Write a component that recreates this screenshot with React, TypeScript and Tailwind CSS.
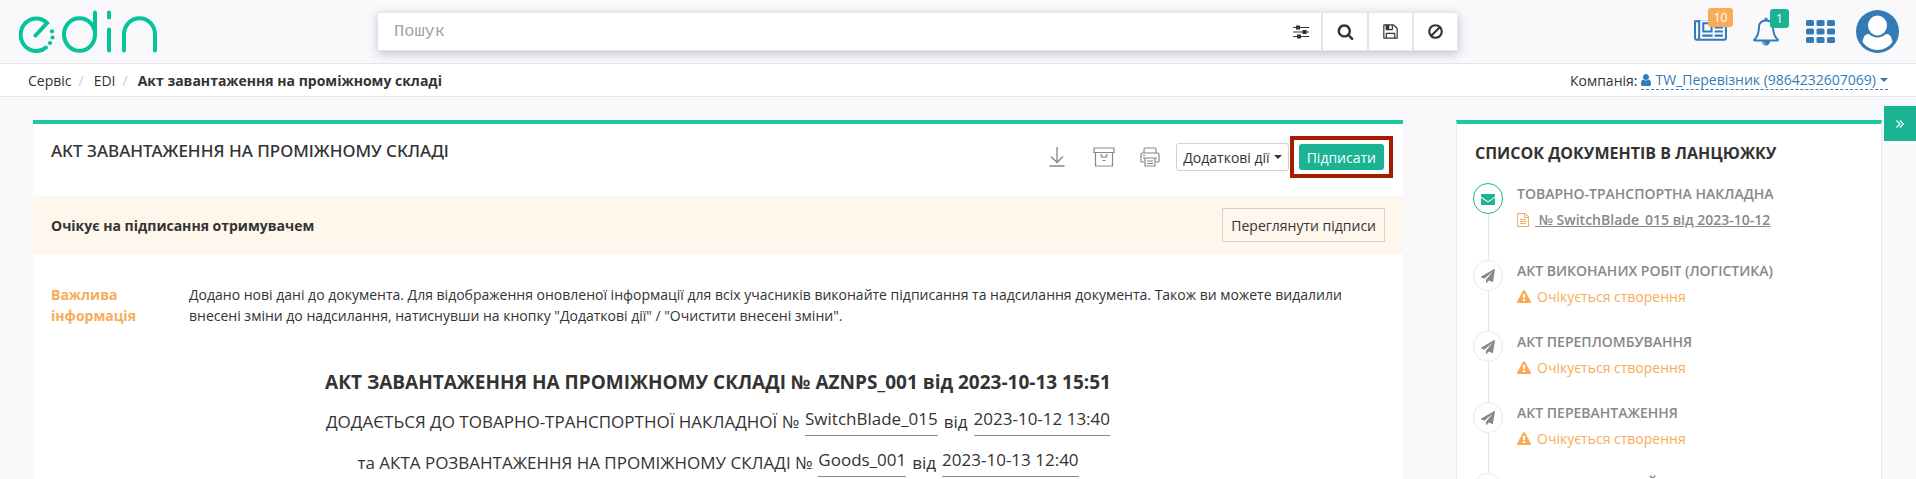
import React from "react";

const icons = {
  search:
    "M1216 832q0-185-131.5-316.5t-316.5-131.5-316.5 131.5-131.5 316.5 131.5 316.5 316.5 131.5 316.5-131.5 131.5-316.5zm512 832q0 52-38 90t-90 38q-54 0-90-38l-343-342q-179 124-399 124-143 0-273.5-55.5t-225-150-150-225-55.5-273.5 55.5-273.5 150-225 225-150 273.5-55.5 273.5 55.5 225 150 150 225 55.5 273.5q0 220-124 399l343 343q37 37 37 90z",
  ban: "M1440 893q0-161-87-295l-754 753q137 89 297 89 111 0 211.5-43.5t173.5-116.5 116-174.5 43-212.5zm-999 299l755-754q-135-91-300-91-148 0-273 73t-198 199-73 274q0 162 89 299zm1223-299q0 157-61 300t-163.5 246-245 164-298.5 61-298.5-61-245-164-163.5-246-61-300 61-299.5 163.5-245.5 245-164 298.5-61 298.5 61 245 164 163.5 245.5 61 299.5z",
  save: "M512 1536h768v-384h-768v384zm896 0h128v-896q0-14-10-38.5t-20-34.5l-281-281q-10-10-34-20t-39-10v416q0 40-28 68t-68 28h-576q-40 0-68-28t-28-68v-416h-128v1280h128v-416q0-40 28-68t68-28h832q40 0 68 28t28 68v416zm-384-928v-320q0-13-9.5-22.5t-22.5-9.5h-192q-13 0-22.5 9.5t-9.5 22.5v320q0 13 9.5 22.5t22.5 9.5h192q13 0 22.5-9.5t9.5-22.5zm640 32v928q0 40-28 68t-68 28h-1344q-40 0-68-28t-28-68v-1344q0-40 28-68t68-28h928q40 0 88 20t76 48l280 280q28 28 48 76t20 88z",
  news: "M1024 512h-384v384h384v-384zm128 640v128h-640v-128h640zm0-768v640h-640v-640h640zm640 768v128h-512v-128h512zm0-256v128h-512v-128h512zm0-256v128h-512v-128h512zm0-256v128h-512v-128h512zm-1536 960v-960h-128v960q0 26 19 45t45 19 45-19 19-45zm1664 0v-1088h-1536v1088q0 33-11 64h1483q26 0 45-19t19-45zm128-1216v1216q0 80-56 136t-136 56h-1664q-80 0-136-56t-56-136v-1088h256v-128h1792z",
  bell: "M912 1696q0-16-16-16-59 0-101.5-42.5t-42.5-101.5q0-16-16-16t-16 16q0 73 51.5 124.5t124.5 51.5q16 0 16-16zm-666-288h1300q-266-300-266-832 0-51-24-105t-69-103-121.5-80.5-169.5-31.5-169.5 31.5-121.5 80.5-69 103-24 105q0 532-266 832zm1482 0q0 52-38 90t-90 38h-448q0 106-75 181t-181 75-181-75-75-181h-448q-52 0-90-38t-38-90q50-42 91-88t85-119.5 74.5-158.5 50-206 19.5-260q0-152 117-282.5t307-158.5q-8-19-8-39 0-40 28-68t68-28 68 28 28 68q0 20-8 39 190 28 307 158.5t117 282.5q0 139 19.5 260t50 206 74.5 158.5 85 119.5 91 88z",
  plane:
    "M1764 11q33 24 27 64l-256 1536q-5 29-32 45-14 8-31 8-11 0-24-5l-453-185-242 295q-18 23-49 23-13 0-22-4-19-7-30.5-23.5t-11.5-36.5v-349l864-1059-1069 925-395-162q-37-14-40-55-2-40 32-59l1664-960q15-9 32-9 20 0 36 11z",
  envelope:
    "M1792 710v794q0 66-47 113t-113 47h-1472q-66 0-113-47t-47-113v-794q44 49 101 87 362 246 497 345 57 42 92.5 65.5t94.5 48 110 24.5h2q51 0 110-24.5t94.5-48 92.5-65.5q170-123 498-345 57-39 100-87zm0-294q0 79-49 151t-122 123q-376 261-468 325-10 7-42.5 31t-54 38.5-52 32.5-57.5 27-50 9h-2q-23 0-50-9t-57.5-27-52-32.5-54-38.5-42.5-31q-91-64-262-182.5t-205-142.5q-62-42-117-115.5t-55-136.5q0-78 41.5-130t118.5-52h1472q65 0 112.5 47t47.5 113z",
  warning:
    "M1024 1375v-190q0-14-9.5-23.5t-22.5-9.5h-192q-13 0-22.5 9.5t-9.5 23.5v190q0 14 9.5 23.5t22.5 9.5h192q13 0 22.5-9.5t9.5-23.5zm-2-374l18-459q0-12-10-19-13-11-24-11h-220q-11 0-24 11-10 7-10 21l17 457q0 10 10 16.5t24 6.5h185q14 0 23.5-6.5t10.5-16.5zm-14-934l768 1408q35 63-2 126-17 29-46.5 46t-63.5 17h-1536q-34 0-63.5-17t-46.5-46q-37-63-2-126l768-1408q17-31 47-49t65-18 65 18 47 49z",
  file: "M1596 380q28 28 48 76t20 88v1152q0 40-28 68t-68 28h-1344q-40 0-68-28t-28-68v-1600q0-40 28-68t68-28h896q40 0 88 20t76 48zm-444-244v376h376q-10-29-22-41l-313-313q-12-12-41-22zm384 1528v-1024h-416q-40 0-68-28t-28-68v-416h-768v1536h1280zm-1024-864q0-14 9-23t23-9h704q14 0 23 9t9 23v64q0 14-9 23t-23 9h-704q-14 0-23-9t-9-23v-64zm736 224q14 0 23 9t9 23v64q0 14-9 23t-23 9h-704q-14 0-23-9t-9-23v-64q0-14 9-23t23-9h704zm0 256q14 0 23 9t9 23v64q0 14-9 23t-23 9h-704q-14 0-23-9t-9-23v-64q0-14 9-23t23-9h704z",
  user: "M1536 1399q0 109-62.5 187t-150.5 78h-854q-88 0-150.5-78t-62.5-187q0-85 8.5-160.5t31.5-152 58.5-131 94-89 134.5-34.5q131 128 313 128t313-128q76 0 134.5 34.5t94 89 58.5 131 31.5 152 8.5 160.5zm-256-887q0 159-112.5 271.5t-271.5 112.5-271.5-112.5-112.5-271.5 112.5-271.5 271.5-112.5 271.5 112.5 112.5 271.5z",
};

function Icon({ name, className, box = "0 0 1792 1792" }: { name: keyof typeof icons; className: string; box?: string }) {
  return (
    <svg viewBox={box} fill="currentColor" aria-hidden="true" className={className}>
      <path d={icons[name]} />
    </svg>
  );
}

function Logo() {
  return (
    <svg viewBox="0 0 138 43" className="h-[43px] w-[138px]" fill="none" stroke="#05c39a" strokeWidth="4" strokeLinecap="round" aria-hidden="true">
      <path d="M16.500 25.500L28 13A15.600 16.300 0 1 0 27 37.500" />
      <g fill="#05c39a" stroke="none">
        <circle cx="33" cy="21.300" r="2.100" />
        <circle cx="33.500" cy="27.500" r="2.100" />
        <circle cx="31" cy="33" r="2.100" />
      </g>
      <ellipse cx="60.500" cy="24.500" rx="15.500" ry="16.300" />
      <path d="M76 2.500V24.500M90 2.500V7.500M90 19.500V40.500M105 40.500V24.500a15.500 16.300 0 0 1 31 0V40.500" />
    </svg>
  );
}

function Header() {
  return (
    <header className="flex h-16 items-center border-b border-[#e4e6ea] pr-[17px]">
      <a href="#home" aria-label="edin" className="w-[378px] shrink-0 pl-[19px]">
        <Logo />
      </a>
      <form className="flex h-[39px] flex-1 items-stretch border-y border-r border-[#e5e6e9] bg-white shadow-[0_3px_10px_rgba(60,70,110,0.3)]">
        <input
          type="text"
          aria-label="Пошук"
          placeholder="Пошук"
          className="min-w-0 flex-1 bg-transparent px-4 font-['Liberation_Mono',monospace] text-[17px] outline-none placeholder:text-[#a0a0a0]"
        />
        <button type="button" aria-label="Фільтри" className="flex w-10 items-center justify-center">
          <svg viewBox="0 0 16 14" className="h-[14px] w-4" fill="#333" aria-hidden="true">
            <path d="M0 2h16v1H0zM0 6.500h16v1H0zM0 11h16v1H0z" />
            <path d="M3 .500h4v4H3zM9.500 5h4v4h-4zM4 9.500h4v4H4z" />
          </svg>
        </button>
        <button type="submit" aria-label="Знайти" className="flex w-[46px] items-center justify-center border-l-2 border-[#e5e6e9]">
          <Icon name="search" className="h-[17px] w-[17px]" />
        </button>
        <button type="button" aria-label="Зберегти" className="flex w-[45px] items-center justify-center border-l-2 border-[#e5e6e9]">
          <Icon name="save" className="h-[17px] w-[17px]" />
        </button>
        <button type="reset" aria-label="Очистити" className="flex w-[45px] items-center justify-center border-l-2 border-[#e5e6e9]">
          <Icon name="ban" className="h-[17px] w-[17px]" />
        </button>
      </form>
      <nav className="flex w-[441px] shrink-0 items-center justify-end text-[#337ab7]">
        <a href="#news" aria-label="Новини" className="relative mr-[26px]">
          <Icon name="news" box="0 256 2048 1408" className="h-[23px] w-[33px]" />
          <span className="absolute -top-3 left-[14px] flex h-[19px] w-[25px] items-center justify-center rounded-[3px] bg-[#f8ac59] text-xs text-white">10</span>
        </a>
        <a href="#alerts" aria-label="Сповіщення" className="relative mr-[27px]">
          <Icon name="bell" box="64 0 1664 1792" className="h-[29px] w-[26px]" />
          <span className="absolute -top-2 left-[17px] flex h-[19px] w-[19px] items-center justify-center rounded-[3px] bg-[#1ab394] text-xs text-white">1</span>
        </a>
        <a href="#services" aria-label="Сервіси" className="mr-[21px]">
          <svg viewBox="0 0 29 23" className="h-[23px] w-[29px]" fill="currentColor" aria-hidden="true">
            {[0, 8.5, 17].map((y) =>
              [0, 10.5, 21].map((x) => <rect key={`${x}-${y}`} x={x} y={y} width="8" height="6" rx="1.5" />)
            )}
          </svg>
        </a>
        <a href="#profile" aria-label="Профіль">
          <svg viewBox="0 0 43 43" className="h-[43px] w-[43px]" aria-hidden="true">
            <circle cx="21.500" cy="21.500" r="21.500" fill="currentColor" />
            <ellipse cx="21.500" cy="15.500" rx="9.500" ry="10" fill="#fff" />
            <path d="M6.500 32C7.500 26.500 9.500 23.500 13 24c5 4.500 12 4.500 17 0 3.500-.500 5.500 2.500 6.500 8-7 10.500-23 10.500-30 0z" fill="#fff" />
          </svg>
        </a>
      </nav>
    </header>
  );
}

function Breadcrumbs() {
  return (
    <div className="flex h-[33px] items-center justify-between border-b border-[#e4e6ea] bg-white pr-7 pl-7">
      <ol className="flex">
        <li><a href="#service">Сервіс</a><span className="pr-[10px] pl-[7px] text-[#ccc]">/</span></li>
        <li><a href="#edi">EDI</a><span className="pr-[10px] pl-[7px] text-[#ccc]">/</span></li>
        <li className="font-bold">Акт завантаження на проміжному складі</li>
      </ol>
      <div className="flex items-center gap-1">
        Компанія:
        <a href="#company" className="flex h-5 items-center gap-1 border-b border-dashed border-[#337ab7] text-[#337ab7]">
          <Icon name="user" box="256 128 1280 1536" className="h-3 w-[10px]" />
          TW_Перевізник (9864232607069)
          <span className="border-x-4 border-t-4 border-x-transparent border-t-[#337ab7]" />
        </a>
      </div>
    </div>
  );
}

function Toolbar() {
  return (
    <div className="flex items-center text-[#888]">
      <button type="button" aria-label="Завантажити" className="mr-7">
        <svg viewBox="0 0 16 20" className="h-5 w-4" fill="none" stroke="currentColor" strokeWidth="1.300" aria-hidden="true">
          <path d="M8 0v15M2 9.500l6 6 6-6M.500 19h15" />
        </svg>
      </button>
      <button type="button" aria-label="Архівувати" className="mr-[25px]">
        <svg viewBox="0 0 22 20" className="h-5 w-[22px]" fill="none" stroke="currentColor" strokeWidth="1.200" aria-hidden="true">
          <path d="M1 1h20v4.500H1zM2.500 5.500V19h17V5.500M8 8c0 3 6 3 6 0M8 7v1.500M14 7v1.500M9.500 13.500h3" />
        </svg>
      </button>
      <button type="button" aria-label="Друкувати" className="mr-4">
        <svg viewBox="0 0 20 20" className="h-5 w-5" fill="none" stroke="currentColor" strokeWidth="1.200" aria-hidden="true">
          <path d="M4 6V2.500Q4 1 5.500 1h9Q16 1 16 2.500V6M4 15H2Q1 15 1 14V8q0-2 2-2h14q2 0 2 2v6q0 1-1 1h-2M5 11h10v8H5zM3 11h14M7 14h6M7 16.500h6M3 8.500h2" />
        </svg>
      </button>
      <button type="button" className="flex h-7 items-center gap-1 rounded-[3px] border border-[#d2d2d2] bg-white px-[6px] text-[#333]">
        Додаткові дії
        <span className="border-x-4 border-t-4 border-x-transparent border-t-[#333]" />
      </button>
      <div className="ml-px border-4 border-[#a61c00] px-[5px] py-1">
        <button type="button" className="block h-[26px] rounded-[3px] bg-[#1ab394] px-2 text-white">Підписати</button>
      </div>
    </div>
  );
}

function Reference({ label, number, date }: { label: string; number: string; date: string }) {
  return (
    <p className="flex h-[41px] items-center justify-center gap-[6px] text-[17px]">
      <span>{label}</span>
      <span className="border-b border-[#888] pb-[6px]">{number}</span>
      <span>від</span>
      <span className="border-b border-[#888] pb-[6px]">{date}</span>
    </p>
  );
}

function DocumentCard() {
  return (
    <main className="min-w-0 flex-1 border-t-4 border-[#1fc8a3] bg-white">
      <div className="flex h-[72px] items-start justify-between pt-3 pr-[10px] pl-[18px]">
        <h1 className="pt-1 font-['Noto_Sans','Open_Sans',sans-serif] text-[17px] leading-[21px] font-medium">АКТ ЗАВАНТАЖЕННЯ НА ПРОМІЖНОМУ СКЛАДІ</h1>
        <Toolbar />
      </div>
      <div className="flex items-center justify-between bg-[#fff6ec] py-3 pr-[18px] pl-[18px]">
        <strong>Очікує на підписання отримувачем</strong>
        <button type="button" className="h-[34px] border border-[#d2d2d2] px-2">Переглянути підписи</button>
      </div>
      <div className="flex px-[18px] pt-[30px]">
        <h2 className="w-[138px] shrink-0 pr-8 font-bold text-[#f8ac59]">Важлива інформація</h2>
        <p>
          Додано нові дані до документа. Для відображення оновленої інформації для всіх учасників виконайте підписання та надсилання документа. Також ви можете видалили внесені зміни до надсилання, натиснувши на кнопку "Додаткові дії" / "Очистити внесені зміни".
        </p>
      </div>
      <section className="pt-[42px]">
        <h2 className="text-center text-[19px] leading-7 font-bold">АКТ ЗАВАНТАЖЕННЯ НА ПРОМІЖНОМУ СКЛАДІ № AZNPS_001 від 2023-10-13 15:51</h2>
        <div className="pt-[5px]">
          <Reference label="ДОДАЄТЬСЯ ДО ТОВАРНО-ТРАНСПОРТНОЇ НАКЛАДНОЇ №" number="SwitchBlade_015" date="2023-10-12 13:40" />
          <Reference label="та АКТА РОЗВАНТАЖЕННЯ НА ПРОМІЖНОМУ СКЛАДІ №" number="Goods_001" date="2023-10-13 12:40" />
        </div>
      </section>
    </main>
  );
}

const pending = ["АКТ ВИКОНАНИХ РОБІТ (ЛОГІСТИКА)", "АКТ ПЕРЕПЛОМБУВАННЯ", "АКТ ПЕРЕВАНТАЖЕННЯ", "АКТ РОЗБІЖНОСТЕЙ"];

function ChainCard() {
  return (
    <aside className="w-[426px] shrink-0 border-x border-t-4 border-x-[#e7eaec] border-t-[#1fc8a3] bg-white px-4 pt-[17px]">
      <h2 className="pl-[2px] text-base leading-6 font-bold">СПИСОК ДОКУМЕНТІВ В ЛАНЦЮЖКУ</h2>
      <ol className="pt-[18px] text-[#888]">
        <li className="flex gap-[14px]">
          <div className="flex flex-col items-center">
            <span className="flex h-[31px] w-[30px] items-center justify-center rounded-full border border-[#1ab394] text-[#1ab394]">
              <Icon name="envelope" className="h-[14px] w-[14px]" />
            </span>
            <span className="w-px flex-1 bg-[#e2e5e9]" />
          </div>
          <div className="h-[77px]">
            <h3 className="font-semibold">ТОВАРНО-ТРАНСПОРТНА НАКЛАДНА</h3>
            <a href="#document" className="flex items-center gap-[6px] pt-[5px] font-semibold">
              <Icon name="file" box="128 0 1536 1792" className="h-[14px] w-3 text-[#f8ac59]" />
              <span className="whitespace-pre underline"> № SwitchBlade_015 від 2023-10-12</span>
            </a>
          </div>
        </li>
        {pending.map((title) => (
          <li key={title} className="flex gap-[14px]">
            <div className="flex flex-col items-center">
              <span className="flex h-[31px] w-[30px] items-center justify-center rounded-full border border-[#e7eaec]">
                <Icon name="plane" className="h-[14px] w-[14px]" />
              </span>
              <span className="w-px flex-1 bg-[#e2e5e9]" />
            </div>
            <div className="h-[71px]">
              <h3 className="font-semibold">{title}</h3>
              <p className="flex items-center gap-[6px] pt-[5px] text-[#f8ac59]">
                <Icon name="warning" className="h-[14px] w-[14px]" />
                Очікується створення
              </p>
            </div>
          </li>
        ))}
      </ol>
    </aside>
  );
}

export default function App() {
  return (
    <div className="relative h-screen overflow-hidden bg-[#f9f9fb] font-['Open_Sans','Noto_Sans',sans-serif] text-sm leading-[21px] text-[#333]">
      <Header />
      <Breadcrumbs />
      <div className="flex min-h-full gap-[53px] pt-[23px] pr-[34px] pl-[33px]">
        <DocumentCard />
        <ChainCard />
      </div>
      <button type="button" aria-label="Згорнути" className="absolute top-[106px] right-0 flex h-[35px] w-8 items-center justify-center bg-[#1ab394] text-white">
        <svg viewBox="0 0 8 8" className="h-2 w-2" fill="none" stroke="currentColor" strokeWidth="1.200" aria-hidden="true">
          <path d="M.500.500L4 4 .500 7.500M4 .500L7.500 4 4 7.500" />
        </svg>
      </button>
    </div>
  );
}
